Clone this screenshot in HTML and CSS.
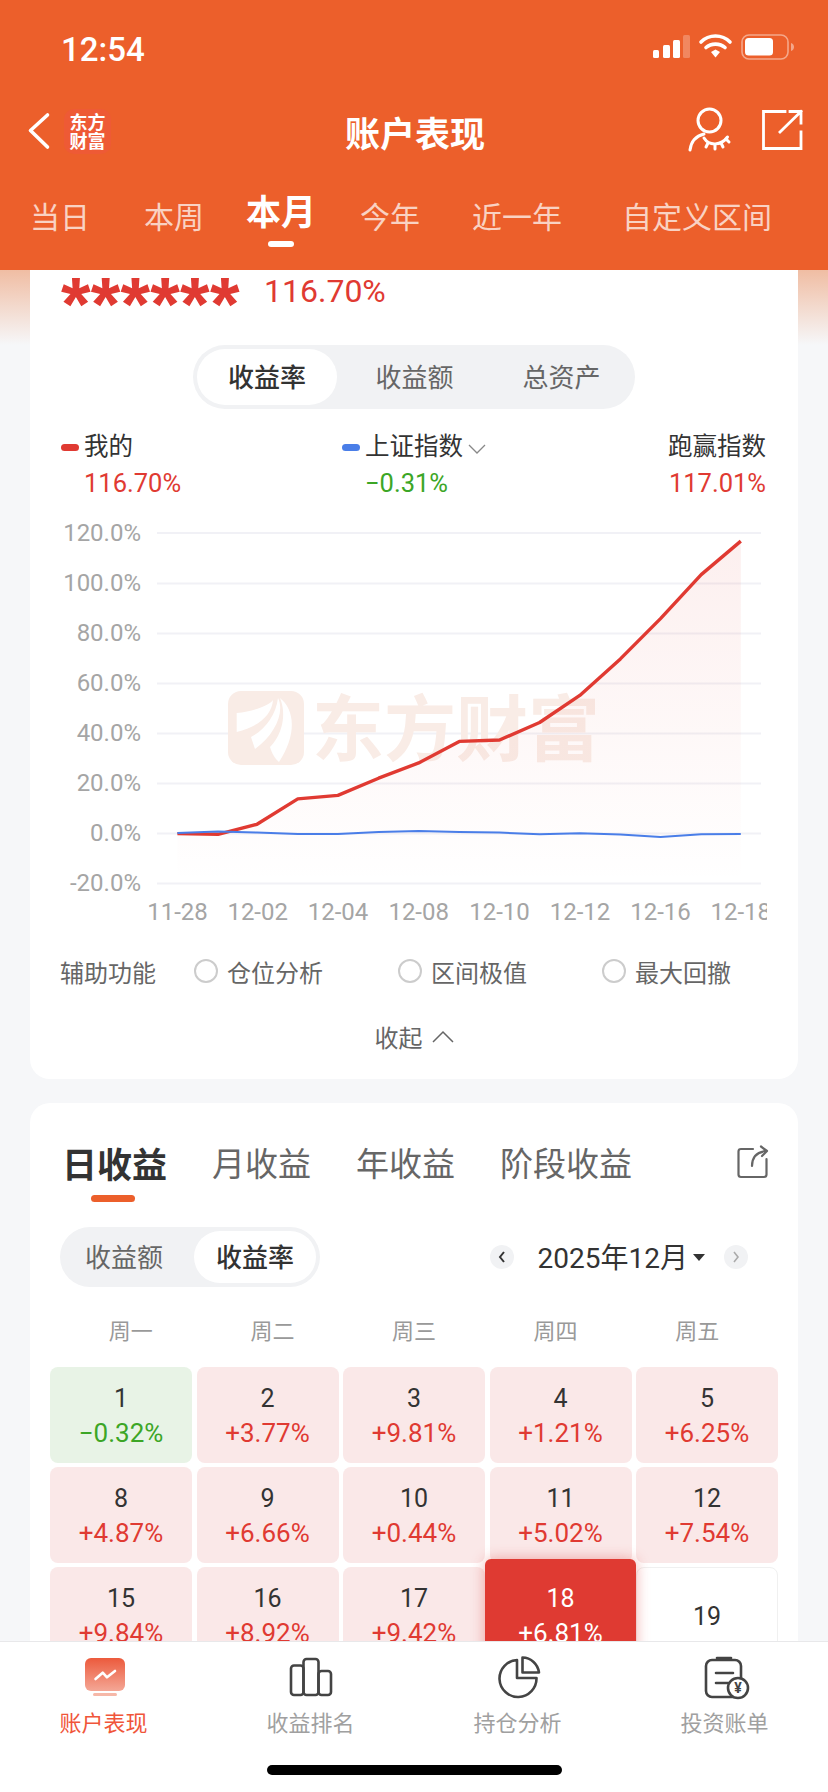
FILE: index.html
```html
<!DOCTYPE html>
<html lang="zh-CN">
<head>
    <meta charset="UTF-8">
    <meta name="viewport" content="width=device-width, initial-scale=1.0">
    <title>账户表现</title>
    <link rel="stylesheet" href="styles.css">
</head>
<body>

<div class="page">
    <header class="header">
        <div class="status-bar">
            <span class="time">12:54</span>
            <svg class="status-icons" width="148" height="30" viewBox="650 34 148 30">
                <rect x="653" y="53" width="6" height="8" rx="1.5" fill="#fff"/>
                <rect x="663" y="48" width="7" height="13" rx="1.5" fill="#fff"/>
                <rect x="673" y="43" width="7" height="18" rx="1.5" fill="#fff"/>
                <rect x="683" y="38" width="7" height="23" rx="1.5" fill="#fff" opacity=".25"/>
                <path d="M701 45 C709 37 722 37 730 45" fill="none" stroke="#fff" stroke-width="3.6" stroke-linecap="round"/>
                <path d="M706 50.5 C711 46 720 46 725 50.5" fill="none" stroke="#fff" stroke-width="3.6" stroke-linecap="round"/>
                <path d="M711 55 L715.5 52.6 L720 55 L715.5 60.5 Z" fill="#fff"/>
                <rect x="742" y="38" width="46" height="24" rx="7" fill="none" stroke="#fff" stroke-opacity=".45" stroke-width="1.6"/>
                <rect x="745" y="41" width="28" height="17.500" rx="3.500" fill="#fff"/>
                <path d="M791 46 C793.500 47 794 48.500 794 50 C794 51.500 793.500 53 791 54 Z" fill="#fff" opacity=".45"/>
            </svg>
        </div>

        <div class="nav-bar">
            <div class="nav-left">
                <svg width="30" height="46" viewBox="24 110 30 46">
                    <path d="M47.500 117 L30.500 132.500 L47.500 149" fill="none" stroke="#fff" stroke-width="3.600" stroke-linecap="round" stroke-linejoin="round"/>
                </svg>
                <div class="brand-logo">东方<br>财富</div>
            </div>
            <div class="nav-title">账户表现</div>
            <div class="nav-right">
                <svg width="50" height="50" viewBox="685 108 50 50">
                    <g fill="none" stroke="#fff" stroke-width="3" stroke-linecap="round">
                        <circle cx="709.500" cy="122.500" r="11.500"/>
                        <path d="M690 152 C691 144 696 138 704 136"/>
                        <path d="M704 140 C709 148 721 148 727.500 139"/>
                        <path d="M708 145 L706 149 M715 147 L715 151 M721 145 L723 149 M726 141 L729 144"/>
                    </g>
                </svg>
                <svg width="48" height="50" viewBox="758 108 48 50">
                    <g fill="none" stroke="#fff" stroke-width="2.800" stroke-linecap="square">
                        <path d="M785 113.500 H763.500 V150.500 H801 V134"/>
                        <path d="M780 134 L801 113.500 M790 113.500 H801 V125"/>
                    </g>
                </svg>
            </div>
        </div>

        <div class="period-tabs">
            <span class="period">当日</span>
            <span class="period">本周</span>
            <span class="period active">本月</span>
            <span class="period">今年</span>
            <span class="period">近一年</span>
            <span class="period">自定义区间</span>
        </div>
    </header>

    <main class="scroller">
        <section class="card chart-card">
            <div class="summary">
                <span class="stars">******</span>
                <span class="summary-rate">116.70%</span>
            </div>

            <div class="segment-wrap">
                <div class="segment three">
                    <span class="segment-item active">收益率</span>
                    <span class="segment-item">收益额</span>
                    <span class="segment-item">总资产</span>
                </div>
            </div>

            <div class="legend">
                <div class="legend-col">
                    <div class="legend-label"><i class="dot dot-red"></i>我的</div>
                    <div class="legend-value red">116.70%</div>
                </div>
                <div class="legend-col">
                    <div class="legend-label">
                        <i class="dot dot-blue"></i>上证指数
                        <svg class="legend-arrow" width="18" height="10" viewBox="0 0 18 10"><path d="M1 1 L9 9 L17 1" fill="none" stroke="#888" stroke-width="1.300"/></svg>
                    </div>
                    <div class="legend-value green">−0.31%</div>
                </div>
                <div class="legend-col right">
                    <div class="legend-label">跑赢指数</div>
                    <div class="legend-value red">117.01%</div>
                </div>
            </div>

            <svg class="chart" width="768" height="425" viewBox="30 505 768 425">
                <defs>
                    <linearGradient id="areaFill" x1="0" y1="0" x2="0" y2="1">
                        <stop offset="0" stop-color="#e03a32" stop-opacity=".08"/>
                        <stop offset="1" stop-color="#e03a32" stop-opacity="0"/>
                    </linearGradient>
                    <clipPath id="labelClip"><rect x="30" y="890" width="737" height="40"/></clipPath>
                </defs>

                <g stroke="#f1f1f6" stroke-width="2">
                    <line x1="157" x2="761" y1="533" y2="533"/>
                    <line x1="157" x2="761" y1="583.500" y2="583.500"/>
                    <line x1="157" x2="761" y1="633.500" y2="633.500"/>
                    <line x1="157" x2="761" y1="683.500" y2="683.500"/>
                    <line x1="157" x2="761" y1="733.500" y2="733.500"/>
                    <line x1="157" x2="761" y1="783.500" y2="783.500"/>
                    <line x1="157" x2="761" y1="833.500" y2="833.500"/>
                    <line x1="157" x2="761" y1="883.500" y2="883.500"/>
                </g>

                <!-- watermark -->
                <rect x="228" y="691" width="76" height="74" rx="13" fill="#f9ece6"/>
                <g fill="#fff">
                    <path d="M236.700 713 C255 711 270 705 273 700 C272 715 258 727 236.700 732 Z"/>
                    <path d="M251 737 C265 730 276 715 278 698 C285 712 275 735 255 749 Z"/>
                    <path d="M280 698 C295 710 297 735 279 762 C273 757 271 750 270 747 C282 735 287 715 280 698 Z"/>
                </g>
                <text class="watermark" x="312" y="755">东方财富</text>

                <polygon fill="url(#areaFill)" points="177.400,833.600 218,834.300 257,824.300 297.800,798.900 337.900,795.400 378.600,778.200 418.700,762.900 459.300,741.400 499.500,740 539.600,722.500 579.800,695.400 620.400,658.900 660.500,618.600 701.200,574.600 740.800,541.100 740.800,884 177.400,884"/>
                <polyline fill="none" stroke="#e03a32" stroke-width="3.400" stroke-linejoin="round" points="177.400,833.600 218,834.300 257,824.300 297.800,798.900 337.900,795.400 378.600,778.200 418.700,762.900 459.300,741.400 499.500,740 539.600,722.500 579.800,695.400 620.400,658.900 660.500,618.600 701.200,574.600 740.800,541.100"/>
                <polyline fill="none" stroke="#4a7ee8" stroke-width="2" stroke-linejoin="round" points="177.400,832.900 218,831.400 257,832.500 297.800,833.900 337.900,833.900 378.600,832.100 418.700,831 459.300,832.100 499.500,832.500 539.600,834.300 579.800,833.200 620.400,834.600 660.500,837.100 701.200,834.300 740.800,833.900"/>

                <g class="axis-y">
                    <text x="141" y="541">120.0%</text>
                    <text x="141" y="591">100.0%</text>
                    <text x="141" y="641">80.0%</text>
                    <text x="141" y="691">60.0%</text>
                    <text x="141" y="741">40.0%</text>
                    <text x="141" y="791">20.0%</text>
                    <text x="141" y="841">0.0%</text>
                    <text x="141" y="891">-20.0%</text>
                </g>
                <g class="axis-x" clip-path="url(#labelClip)">
                    <text x="177.500" y="920">11-28</text>
                    <text x="257.700" y="920">12-02</text>
                    <text x="338" y="920">12-04</text>
                    <text x="418.700" y="920">12-08</text>
                    <text x="499.500" y="920">12-10</text>
                    <text x="580" y="920">12-12</text>
                    <text x="660.500" y="920">12-16</text>
                    <text x="740.800" y="920">12-18</text>
                </g>
            </svg>

            <div class="aux-row">
                <span class="aux-title">辅助功能</span>
                <span class="aux-option"><i class="radio"></i>仓位分析</span>
                <span class="aux-option"><i class="radio"></i>区间极值</span>
                <span class="aux-option last"><i class="radio"></i>最大回撤</span>
            </div>

            <div class="collapse">
                收起
                <svg width="22" height="13" viewBox="0 0 22 13"><path d="M1 12 L11 2 L21 12" fill="none" stroke="#666" stroke-width="1.500"/></svg>
            </div>
        </section>

        <section class="card profit-card">
            <div class="profit-tabs">
                <span class="profit-tab active">日收益</span>
                <span class="profit-tab">月收益</span>
                <span class="profit-tab">年收益</span>
                <span class="profit-tab">阶段收益</span>
                <svg class="profit-share" width="32" height="34" viewBox="0 0 32 34">
                    <g fill="none" stroke="#666" stroke-width="2.200" stroke-linecap="round" stroke-linejoin="round">
                        <path d="M16 4 H4 Q1.500 4 1.500 6.500 V29.500 Q1.500 32 4 32 H27 Q29.500 32 29.500 29.500 V14"/>
                        <path d="M15 21 C15 12 19 7 29 6 M24 1.500 L30 6 L25 11"/>
                    </g>
                </svg>
            </div>

            <div class="calendar-bar">
                <div class="segment two">
                    <span class="segment-item">收益额</span>
                    <span class="segment-item active">收益率</span>
                </div>
                <div class="month-picker">
                    <span class="month-arrow">
                        <svg width="8" height="12" viewBox="0 0 8 12"><path d="M6 1 L2 6 L6 11" fill="none" stroke="#333" stroke-width="2"/></svg>
                    </span>
                    <span class="month-text">2025年12月</span>
                    <i class="caret"></i>
                    <span class="month-arrow">
                        <svg width="8" height="12" viewBox="0 0 8 12"><path d="M2 1 L6 6 L2 11" fill="none" stroke="#aaa" stroke-width="1.600"/></svg>
                    </span>
                </div>
            </div>

            <div class="weekdays">
                <span>周一</span>
                <span>周二</span>
                <span>周三</span>
                <span>周四</span>
                <span>周五</span>
            </div>

            <div class="days">
                <div class="day down"><b>1</b><em>−0.32%</em></div>
                <div class="day up"><b>2</b><em>+3.77%</em></div>
                <div class="day up"><b>3</b><em>+9.81%</em></div>
                <div class="day up"><b>4</b><em>+1.21%</em></div>
                <div class="day up"><b>5</b><em>+6.25%</em></div>
                <div class="day up"><b>8</b><em>+4.87%</em></div>
                <div class="day up"><b>9</b><em>+6.66%</em></div>
                <div class="day up"><b>10</b><em>+0.44%</em></div>
                <div class="day up"><b>11</b><em>+5.02%</em></div>
                <div class="day up"><b>12</b><em>+7.54%</em></div>
                <div class="day up"><b>15</b><em>+9.84%</em></div>
                <div class="day up"><b>16</b><em>+8.92%</em></div>
                <div class="day up"><b>17</b><em>+9.42%</em></div>
                <div class="day today"><b>18</b><em>+6.81%</em></div>
                <div class="day empty"><b>19</b></div>
            </div>
        </section>
    </main>

    <footer class="tab-bar">
        <div class="tab-items">
            <div class="tab-item active">
                <svg width="60" height="44" viewBox="73 1656 60 44">
                    <defs>
                        <linearGradient id="tabFill" x1="0" y1="0" x2="0" y2="1">
                            <stop offset="0" stop-color="#ec5a3c"/>
                            <stop offset="1" stop-color="#f4a796"/>
                        </linearGradient>
                    </defs>
                    <rect x="84" y="1658" width="40" height="33" rx="6" fill="url(#tabFill)"/>
                    <rect x="92" y="1693" width="24" height="3" rx="1.500" fill="#f6b8a8"/>
                    <path d="M94.500 1679 L101.700 1672.700 L106 1677.300 L114 1671" fill="none" stroke="#fff" stroke-width="2.600" stroke-linecap="round" stroke-linejoin="round"/>
                </svg>
                <span>账户表现</span>
            </div>
            <div class="tab-item">
                <svg width="60" height="44" viewBox="281 1656 60 44">
                    <g fill="none" stroke="#444" stroke-width="2.600" stroke-linejoin="round">
                        <rect x="291" y="1665.500" width="12.500" height="29.500" rx="3"/>
                        <rect x="303.500" y="1659" width="15" height="36" rx="3"/>
                        <rect x="318.500" y="1671" width="12.500" height="24" rx="3"/>
                    </g>
                </svg>
                <span>收益排名</span>
            </div>
            <div class="tab-item">
                <svg width="60" height="44" viewBox="487 1656 60 44">
                    <g fill="none" stroke="#444" stroke-width="2.600" stroke-linejoin="round">
                        <path d="M516 1660 A18.500 18.500 0 1 0 535.500 1678 L516 1678 Z"/>
                        <path d="M521.500 1657.500 A17 17 0 0 1 538 1672.500 L521.500 1672.500 Z"/>
                    </g>
                </svg>
                <span>持仓分析</span>
            </div>
            <div class="tab-item">
                <svg width="60" height="44" viewBox="694 1656 60 44">
                    <g fill="none" stroke="#444" stroke-width="2.600" stroke-linecap="round">
                        <rect x="705" y="1660" width="35" height="37" rx="6"/>
                        <path d="M716 1658 H730"/>
                        <path d="M715 1673 H732 M715 1683 H727"/>
                    </g>
                    <circle cx="737" cy="1688" r="10" fill="#fff" stroke="#444" stroke-width="2.600"/>
                    <text class="yen" x="737" y="1693">¥</text>
                </svg>
                <span>投资账单</span>
            </div>
        </div>
        <div class="home-indicator"></div>
    </footer>
</div>

</body>
</html>
```

FILE: styles.css
```css
* {
    box-sizing: border-box;
}
body {
    margin: 0;
    font-family: Roboto, "Noto Sans CJK SC", sans-serif;
    color: #333;
    background-color: #f6f7f9;
}
i, em {
    font-style: normal;
}
.page {
    display: flex;
    flex-direction: column;
    height: 100vh;
    overflow: hidden;
}

/* header */
.header {
    flex: none;
    height: 270px;
    background-color: #ec5f2b;
    color: #fff;
}
.status-bar {
    display: flex;
    justify-content: space-between;
    align-items: center;
    height: 91px;
    padding: 8px 30px 0 61px;
}
.time {
    font-size: 33px;
    font-weight: 500;
}
.status-icons {
    margin-top: -8px;
}
.nav-bar {
    display: grid;
    grid-template-columns: 1fr auto 1fr;
    align-items: center;
    height: 80px;
    padding: 0 22px 0 24px;
}
.nav-left {
    display: flex;
    align-items: center;
    gap: 10px;
}
.brand-logo {
    width: 47px;
    height: 45px;
    padding-top: 4px;
    background-color: #ee5a35;
    border-radius: 10px;
    font-size: 18px;
    font-weight: 700;
    line-height: 19px;
    text-align: center;
}
.nav-title {
    font-size: 35px;
    font-weight: 700;
}
.nav-right {
    display: flex;
    justify-content: flex-end;
    gap: 23px;
}
.period-tabs {
    display: flex;
    align-items: center;
    height: 88px;
    padding-left: 30px;
}
.period {
    position: relative;
    font-size: 30px;
    color: rgba(255, 255, 255, 0.72);
}
.period:nth-child(2) { margin-left: 54px; }
.period:nth-child(3) { margin-left: 42px; }
.period:nth-child(4) { margin-left: 44px; }
.period:nth-child(5) { margin-left: 52px; }
.period:nth-child(6) { margin-left: 60px; }
.period.active {
    margin-bottom: 12px;
    font-size: 35px;
    font-weight: 700;
    color: #fff;
}
.period.active::after {
    content: "";
    position: absolute;
    left: 22px;
    bottom: -12px;
    width: 26px;
    height: 6px;
    border-radius: 3px;
    background-color: #fff;
}

/* scrolling part */
.scroller {
    flex: 1;
    min-height: 0;
    overflow: hidden;
    background: linear-gradient(#f0bda3 0, #f6f7f9 75px);
}
.card {
    margin: 0 30px 24px;
    background-color: #fff;
}
.chart-card {
    border-radius: 0 0 20px 20px;
    padding-bottom: 23px;
}
.profit-card {
    border-radius: 20px 20px 0 0;
    padding-top: 34px;
}
.summary {
    display: flex;
    align-items: flex-start;
    height: 75px;
    padding-left: 31px;
}
.stars {
    width: 178px;
    font-family: "Liberation Sans", sans-serif;
    font-size: 76px;
    font-weight: 700;
    line-height: 68px;
    letter-spacing: 0.2px;
    color: #e03a32;
    white-space: nowrap;
}
.summary-rate {
    margin-left: 25px;
    font-size: 32px;
    line-height: 42px;
    color: #e03a32;
}

/* segmented switches */
.segment-wrap {
    display: flex;
    justify-content: center;
}
.segment {
    display: flex;
    background-color: #f1f2f4;
}
.segment-item {
    display: flex;
    justify-content: center;
    align-items: center;
    padding-bottom: 4px;
    font-size: 26px;
    color: #666;
}
.segment-item.active {
    background-color: #fff;
    color: #333;
    font-weight: 500;
}
.segment.three {
    width: 442px;
    height: 64px;
    border-radius: 32px;
}
.segment.three .segment-item {
    flex: 1;
}
.segment.three .segment-item.active {
    flex: none;
    width: 140px;
    margin: 4px;
    border-radius: 28px;
}
.segment.two {
    width: 260px;
    height: 60px;
    padding: 4px;
    border-radius: 30px;
}
.segment.two .segment-item {
    width: 120px;
    margin-right: 10px;
}
.segment.two .segment-item.active {
    width: 122px;
    margin-right: 0;
    border-radius: 26px;
}

/* legend */
.legend {
    display: grid;
    grid-template-columns: 281px 1fr auto;
    padding: 20px 32px 0 31px;
    font-size: 24.500px;
    line-height: 36px;
}
.legend-col.right {
    text-align: right;
}
.legend-label {
    display: flex;
    align-items: center;
    color: #333;
}
.legend-arrow {
    margin: 4px 0 0 5px;
}
.legend-value {
    padding-left: 23px;
    font-size: 25.500px;
}
.legend-col.right .legend-value {
    padding-left: 0;
}
.dot {
    width: 18px;
    height: 7px;
    margin-right: 5px;
    border-radius: 4px;
}
.dot-red { background-color: #e03a32; }
.dot-blue { background-color: #4a7ee8; }
.red { color: #e03a32; }
.green { color: #3ca626; }

/* chart */
.chart {
    display: block;
    margin-top: 4px;
}
.axis-y text {
    font-size: 24px;
    fill: #a5a5a5;
    text-anchor: end;
}
.axis-x text {
    font-size: 24px;
    fill: #a5a5a5;
    text-anchor: middle;
}
.watermark {
    font-size: 72px;
    font-weight: 700;
    fill: #f9ece6;
}
.aux-row {
    display: flex;
    align-items: center;
    height: 48px;
    margin-top: 17px;
    padding-left: 30px;
    font-size: 24px;
    color: #666;
}
.aux-title {
    flex: none;
    width: 134px;
}
.aux-option {
    flex: none;
    display: flex;
    align-items: center;
    width: 204px;
}
.aux-option.last {
    width: auto;
}
.radio {
    width: 24px;
    height: 24px;
    margin-right: 9px;
    border: 2px solid #ccc;
    border-radius: 50%;
}
.collapse {
    display: flex;
    justify-content: center;
    align-items: center;
    gap: 9px;
    height: 40px;
    margin-top: 21px;
    font-size: 24px;
    color: #666;
}

/* profit card */
.profit-tabs {
    display: flex;
    align-items: center;
    gap: 45px;
    height: 50px;
    padding: 0 29px 0 32px;
}
.profit-tab {
    position: relative;
    font-size: 33px;
    color: #666;
}
.profit-tab.active {
    font-size: 35px;
    font-weight: 700;
    color: #333;
}
.profit-tab.active::after {
    content: "";
    position: absolute;
    left: 29px;
    bottom: -14px;
    width: 44px;
    height: 7px;
    border-radius: 4px;
    background-color: #ec5f2b;
}
.profit-share {
    margin-left: auto;
}
.calendar-bar {
    display: flex;
    justify-content: space-between;
    align-items: center;
    margin-top: 40px;
    padding: 0 50px 0 30px;
}
.month-picker {
    display: flex;
    align-items: center;
}
.month-arrow {
    display: flex;
    justify-content: center;
    align-items: center;
    width: 24px;
    height: 24px;
    border-radius: 50%;
    background-color: #f1f2f4;
}
.month-text {
    margin-left: 24px;
    padding-bottom: 3px;
    font-size: 28px;
}
.caret {
    width: 0;
    height: 0;
    margin: 0 19px 0 5px;
    border-left: 6.500px solid transparent;
    border-right: 6.500px solid transparent;
    border-top: 7px solid #333;
}
.weekdays {
    display: grid;
    grid-template-columns: repeat(5, 1fr);
    height: 40px;
    margin-top: 25px;
    padding: 0 30px;
    font-size: 22px;
    line-height: 40px;
    text-align: center;
    color: #999;
}
.days {
    display: grid;
    grid-template-columns: repeat(5, 142px);
    grid-auto-rows: 96px;
    gap: 4px 4.500px;
    margin-top: 15px;
    padding-left: 20px;
}
.day {
    display: flex;
    flex-direction: column;
    justify-content: center;
    align-items: center;
    border-radius: 8px;
    font-size: 25px;
    line-height: 36px;
}
.day b {
    margin: 2px 0 -2px;
    font-weight: 400;
    color: #333;
}
.day em {
    font-size: 26px;
}
.day.up {
    background-color: #fae8e8;
}
.day.up em {
    color: #e03a32;
}
.day.down {
    background-color: #e8f3e6;
}
.day.down em {
    color: #3ca626;
}
.day.today {
    position: relative;
    z-index: 1;
    margin: -8px -4.500px;
    border-radius: 6px;
    background-color: #df3a32;
    box-shadow: 0 0 14px rgba(223, 58, 50, 0.4);
    color: #fff;
}
.day.today b {
    color: #fff;
}
.day.empty {
    border: 1px solid #f0f0f0;
}

/* bottom tabs */
.tab-bar {
    flex: none;
    height: 151px;
    background-color: #fff;
    border-top: 1px solid #e8e8ea;
}
.tab-items {
    display: grid;
    grid-template-columns: repeat(4, 1fr);
    padding-top: 14px;
}
.tab-item {
    display: flex;
    flex-direction: column;
    align-items: center;
    font-size: 22px;
    color: #a0a0a0;
}
.tab-item span {
    margin-top: 9px;
    line-height: 30px;
}
.tab-item.active {
    color: #f0553a;
}
.yen {
    font-size: 14px;
    font-weight: 700;
    fill: #444;
    text-anchor: middle;
}
.home-indicator {
    width: 295px;
    height: 10px;
    margin: 26px auto 0;
    border-radius: 5px;
    background-color: #000;
}
```
